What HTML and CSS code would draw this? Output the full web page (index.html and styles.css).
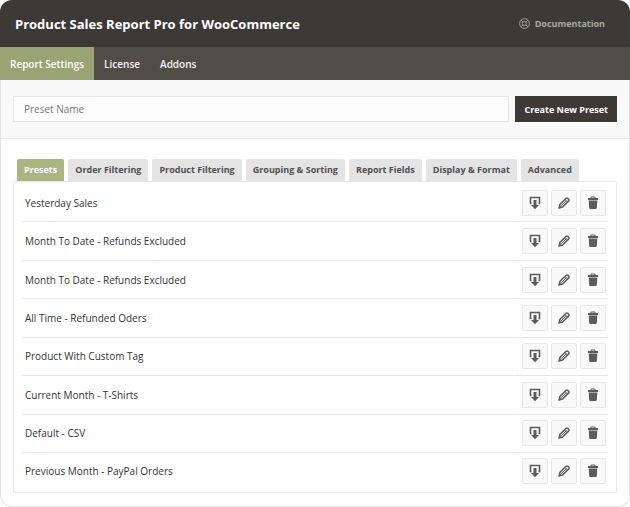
FILE: index.html
```html
<!DOCTYPE html>
<html lang="en">
<head>
    <meta charset="utf-8">
    <title>Product Sales Report Pro for WooCommerce</title>
    <link rel="stylesheet" href="styles.css">
</head>
<body>
    <svg class="sprite" aria-hidden="true">
        <symbol id="icon-run" viewBox="0 0 12 14">
            <path d="M2.500 7.500H1.500V1.500h9v6H9.500" fill="none" stroke="currentColor" stroke-width="1.600"/>
            <path d="M4.500 4h3v5h2.500L6 13.200 2 9h2.500z" fill="currentColor"/>
        </symbol>
        <symbol id="icon-edit" viewBox="0 0 12 12">
            <path d="M1.200 10.800l.7-3.300 6.300-6.200c.5-.5 1.200-.4 1.700.1l.8.8c.5.5.5 1.200 0 1.700L4.500 10.100z" fill="none" stroke="currentColor" stroke-width="1.500"/>
            <path d="M3.200 8.800l5-5M7 2.500l2.600 2.600" fill="none" stroke="currentColor"/>
            <path d="M.5 11.500l.8-3.500 2.700 2.700z" fill="currentColor"/>
        </symbol>
        <symbol id="icon-delete" viewBox="0 0 12 14">
            <path d="M4 2V1h4v1" fill="none" stroke="currentColor"/>
            <path d="M1 2h10v2H1zM1.700 4.400h8.600l-.5 7.600c-.1.600-.5 1-1 1H3.200c-.5 0-.9-.4-1-1z" fill="currentColor"/>
        </symbol>
    </svg>

    <div class="wrapper">
        <header class="header">
            <h1 class="title">Product Sales Report Pro for WooCommerce</h1>
            <a class="doc-link" href="#">
                <svg class="doc-icon" viewBox="0 0 12 12" fill="none" stroke="currentColor">
                    <circle cx="6" cy="6" r="5.300"/>
                    <circle cx="6" cy="6" r="2.200"/>
                    <path d="M2.300 2.300l2.200 2.200M9.700 2.300l-2.200 2.200M2.300 9.700l2.200-2.200M9.700 9.700l-2.200-2.200"/>
                </svg>
                Documentation
            </a>
        </header>

        <nav class="nav">
            <a class="nav-link active" href="#">Report Settings</a>
            <a class="nav-link" href="#">License</a>
            <a class="nav-link" href="#">Addons</a>
        </nav>

        <form class="preset-form">
            <input class="preset-name" type="text" placeholder="Preset Name" aria-label="Preset Name">
            <button class="create-btn" type="button">Create New Preset</button>
        </form>

        <main class="content">
            <div class="tabs" role="tablist">
                <button class="tab active" role="tab" aria-selected="true">Presets</button>
                <button class="tab" role="tab">Order Filtering</button>
                <button class="tab" role="tab">Product Filtering</button>
                <button class="tab" role="tab">Grouping &amp; Sorting</button>
                <button class="tab" role="tab">Report Fields</button>
                <button class="tab" role="tab">Display &amp; Format</button>
                <button class="tab" role="tab">Advanced</button>
            </div>
            <div class="panel">
                <table class="presets">
                    <tbody class="js-presets"></tbody>
                </table>
            </div>
        </main>
    </div>

    <script>
        const presets = [
            'Yesterday Sales',
            'Month To Date - Refunds Excluded',
            'Month To Date - Refunds Excluded',
            'All Time - Refunded Oders',
            'Product With Custom Tag',
            'Current Month - T-Shirts',
            'Default - CSV',
            'Previous Month - PayPal Orders'
        ];

        let rows = '';

        presets.forEach((name) => {
            rows += `<tr>
                <td class="preset">${name}</td>
                <td class="actions"><div class="action-list">
                    <button class="action" aria-label="Run ${name}"><svg class="icon tall"><use href="#icon-run"/></svg></button>
                    <button class="action" aria-label="Edit ${name}"><svg class="icon"><use href="#icon-edit"/></svg></button>
                    <button class="action" aria-label="Delete ${name}"><svg class="icon tall"><use href="#icon-delete"/></svg></button>
                </div></td>
            </tr>`;
        });

        document.querySelector('.js-presets').innerHTML = rows;
    </script>
</body>
</html>
```
FILE: styles.css
```css
* {
    box-sizing: border-box;
}
body {
    margin: 0;
    background-color: white;
    color: #333;
    font-family: "Open Sans", sans-serif;
    font-size: 10px;
}
button,
input {
    font-family: inherit;
    font-size: inherit;
}
a {
    text-decoration: none;
}
.sprite {
    display: none;
}
.wrapper {
    border: 1px solid #e2e2e2;
    border-top: none;
    border-radius: 12px;
}
.header {
    display: flex;
    justify-content: space-between;
    align-items: center;
    height: 47px;
    margin: 0 -1px;
    padding: 0 25px 0 15px;
    background-color: #3c3a36;
    border-radius: 12px 12px 0 0;
}
.title {
    margin: 0;
    color: white;
    font-size: 13px;
    font-weight: 700;
}
.doc-link {
    display: flex;
    align-items: center;
    gap: 5px;
    color: #aaa8a5;
    font-size: 9px;
    font-weight: 700;
}
.doc-icon {
    width: 11px;
    height: 11px;
}
.nav {
    display: flex;
    height: 33px;
    margin: 0 -1px;
    background-color: #504c47;
}
.nav-link {
    display: flex;
    align-items: center;
    padding: 0 10px;
    color: #f4f4f4;
    font-weight: 600;
}
.nav-link.active {
    background-color: #99a373;
    color: white;
}
.preset-form {
    display: flex;
    gap: 6px;
    padding: 16px 12px;
    background-color: #f9f9f9;
    border-bottom: 1px solid #e8e8e8;
}
.preset-name {
    flex: 1;
    height: 26px;
    padding: 0 10px;
    background-color: #fdfdfd;
    border: 1px solid #e5e7e9;
    color: #444;
}
.preset-name::placeholder {
    color: #777;
}
.create-btn {
    height: 26px;
    padding: 0 9px;
    background-color: #3c3a36;
    border: none;
    color: white;
    font-size: 9px;
    font-weight: 700;
}
.content {
    padding: 20px 12px 13px;
}
.tabs {
    display: flex;
    gap: 4px;
    padding: 0 4px;
}
.tab {
    height: 22px;
    padding: 0 7px 2px;
    background-color: #e4e4e4;
    border: none;
    border-radius: 2px 2px 0 0;
    color: #505050;
    font-size: 9px;
    font-weight: 700;
    white-space: nowrap;
}
.tab.active {
    background-color: #abb57f;
    color: white;
}
.panel {
    padding: 2px 7px;
    border: 1px solid #e5e7e9;
    border-radius: 2px;
}
.presets {
    width: 100%;
    height: 306px;
    border-spacing: 1px 0;
}
.presets td {
    padding: 0;
    border-bottom: 1px solid #e5e7e9;
}
.presets tr:last-child td {
    border-bottom: none;
}
.presets .preset {
    padding-left: 3px;
}
.actions {
    width: 93px;
}
.action-list {
    display: flex;
    gap: 3px;
    padding-left: 7px;
}
.action {
    display: flex;
    justify-content: center;
    align-items: center;
    width: 26px;
    height: 26px;
    padding: 0;
    background-color: #f9f9f9;
    border: 1px solid #e5e7e9;
    border-radius: 2px;
    color: #5c5c5c;
}
.icon {
    width: 12px;
    height: 12px;
}
.icon.tall {
    height: 14px;
}
```
